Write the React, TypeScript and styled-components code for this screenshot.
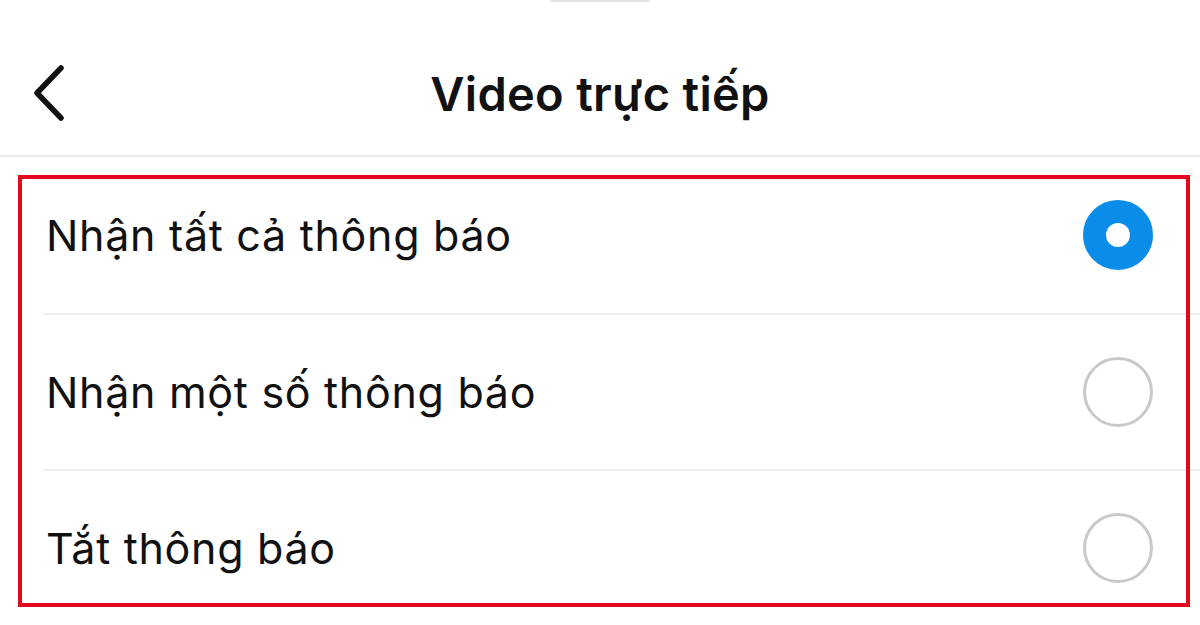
import React, { FunctionComponent, useState } from 'react';
import styled, { createGlobalStyle } from 'styled-components';

const GlobalStyle = createGlobalStyle`
  html, body {
    margin: 0;
    padding: 0;
    background: #ffffff;
  }
  body {
    font-family: Inter, Roboto, "Noto Sans", "Liberation Sans", sans-serif;
    color: #111111;
  }
`;

const Screen = styled.div`
  position: relative;
  width: 1200px;
  height: 625px;
  overflow: hidden;
  background: #ffffff;
`;

const Handle = styled.div`
  width: 100px;
  height: 2px;
  margin: 0 auto;
  background: #e2e2e2;
  border-radius: 0 0 2px 2px;
`;

const Header = styled.header`
  display: grid;
  grid-template-columns: 120px 1fr 120px;
  align-items: center;
  height: 157px;
  margin-top: -2px;
  padding-top: 32px;
  border-bottom: 2px solid #ebebeb;
  box-sizing: border-box;
`;

const BackButton = styled.button`
  display: flex;
  align-items: center;
  margin: 0;
  padding: 0 0 0 33px;
  border: 0;
  background: none;
  cursor: pointer;
`;

const Title = styled.h1`
  margin: 0;
  text-align: center;
  font-size: 47px;
  font-weight: 600;
  color: #111111;
  letter-spacing: 0.3px;
`;

const List = styled.ul`
  list-style: none;
  margin: 0;
  padding: 0;
`;

const Row = styled.li<{ first?: boolean }>`
  display: flex;
  align-items: center;
  justify-content: space-between;
  height: 156px;
  margin-left: 43px;
  padding: 0 47px 0 0;
  box-sizing: border-box;
  border-top: ${({ first }) => (first ? '0' : '2px solid #efefef')};
  cursor: pointer;
`;

const Label = styled.span`
  font-size: 43px;
  font-weight: 400;
  color: #111111;
  letter-spacing: 0.7px;
  padding-left: 3px;
`;

const Radio = styled.span<{ checked: boolean }>`
  display: block;
  width: 70px;
  height: 70px;
  border-radius: 50%;
  box-sizing: border-box;
  border: ${({ checked }) => (checked ? '23px solid #0a8de9' : '3px solid #c9c9c9')};
  background: #ffffff;
`;

const Highlight = styled.div`
  position: absolute;
  left: 18px;
  top: 175px;
  width: 1172px;
  height: 432px;
  box-sizing: border-box;
  border: 4px solid #e2071c;
  pointer-events: none;
`;

const options = ['Nhận tất cả thông báo', 'Nhận một số thông báo', 'Tắt thông báo'];

const App: FunctionComponent = () => {
  const [selected, setSelected] = useState(0);

  return (
    <>
      <GlobalStyle />
      <Screen>
        <Handle />
        <Header>
          <BackButton aria-label="Quay lại">
            <svg width="32" height="58" viewBox="0 0 32 58" fill="none">
              <path d="M28 3 L4 28 L28 53" stroke="#111" strokeWidth="5.5" strokeLinecap="round" strokeLinejoin="round" />
            </svg>
          </BackButton>
          <Title>Video trực tiếp</Title>
          <span />
        </Header>
        <List>
          {options.map((label, i) => (
            <Row key={label} first={i === 0} onClick={() => setSelected(i)}>
              <Label>{label}</Label>
              <Radio checked={selected === i} />
            </Row>
          ))}
        </List>
        <Highlight />
      </Screen>
    </>
  );
};

export default App;
